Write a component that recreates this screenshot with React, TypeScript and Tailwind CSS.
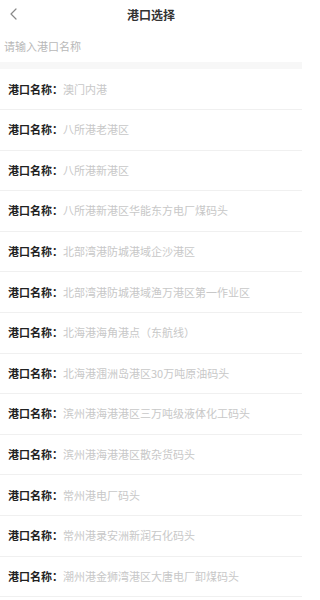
import React from "react";

const items = [
  "澳门内港",
  "八所港老港区",
  "八所港新港区",
  "八所港新港区华能东方电厂煤码头",
  "北部湾港防城港域企沙港区",
  "北部湾港防城港域渔万港区第一作业区",
  "北海港海角港点（东航线）",
  "北海港涠洲岛港区30万吨原油码头",
  "滨州港海港港区三万吨级液体化工码头",
  "滨州港海港港区散杂货码头",
  "常州港电厂码头",
  "常州港录安洲新润石化码头",
  "潮州港金狮湾港区大唐电厂卸煤码头",
];

export default function App() {
  return (
    <div
      className="w-[302px] h-[600px] overflow-hidden bg-white"
      style={{ fontFamily: '"Noto Sans CJK SC", "Noto Sans", sans-serif' }}
    >
      <div className="relative h-[30px] flex items-center justify-center">
        <svg
          className="absolute left-[9px] top-[8px]"
          width="9"
          height="12"
          viewBox="0 0 9 12"
          fill="none"
        >
          <path d="M7 1 L2 6 L7 11" stroke="#888" strokeWidth="1.2" strokeLinecap="round" strokeLinejoin="round" />
        </svg>
        <span className="text-[12px] font-bold text-[#333] leading-none">港口选择</span>
      </div>
      <div className="h-[32px] flex items-center pl-[4px]">
        <span className="text-[11px] text-[#b8b8b8] leading-none">请输入港口名称</span>
      </div>
      <div className="h-[7.4px] bg-[#f7f7f7]" />
      <div className="flex flex-col">
        {items.map((it, i) => (
          <div
            key={i}
            className="h-[40.6px] shrink-0 flex items-center pl-[8px] border-b border-[#f0f0f0] box-border"
          >
            <span className="text-[11px] font-bold text-[#222] leading-none whitespace-nowrap">港口名称：</span>
            <span className="text-[11px] text-[#c8c8c8] leading-none whitespace-nowrap">{it}</span>
          </div>
        ))}
      </div>
    </div>
  );
}
